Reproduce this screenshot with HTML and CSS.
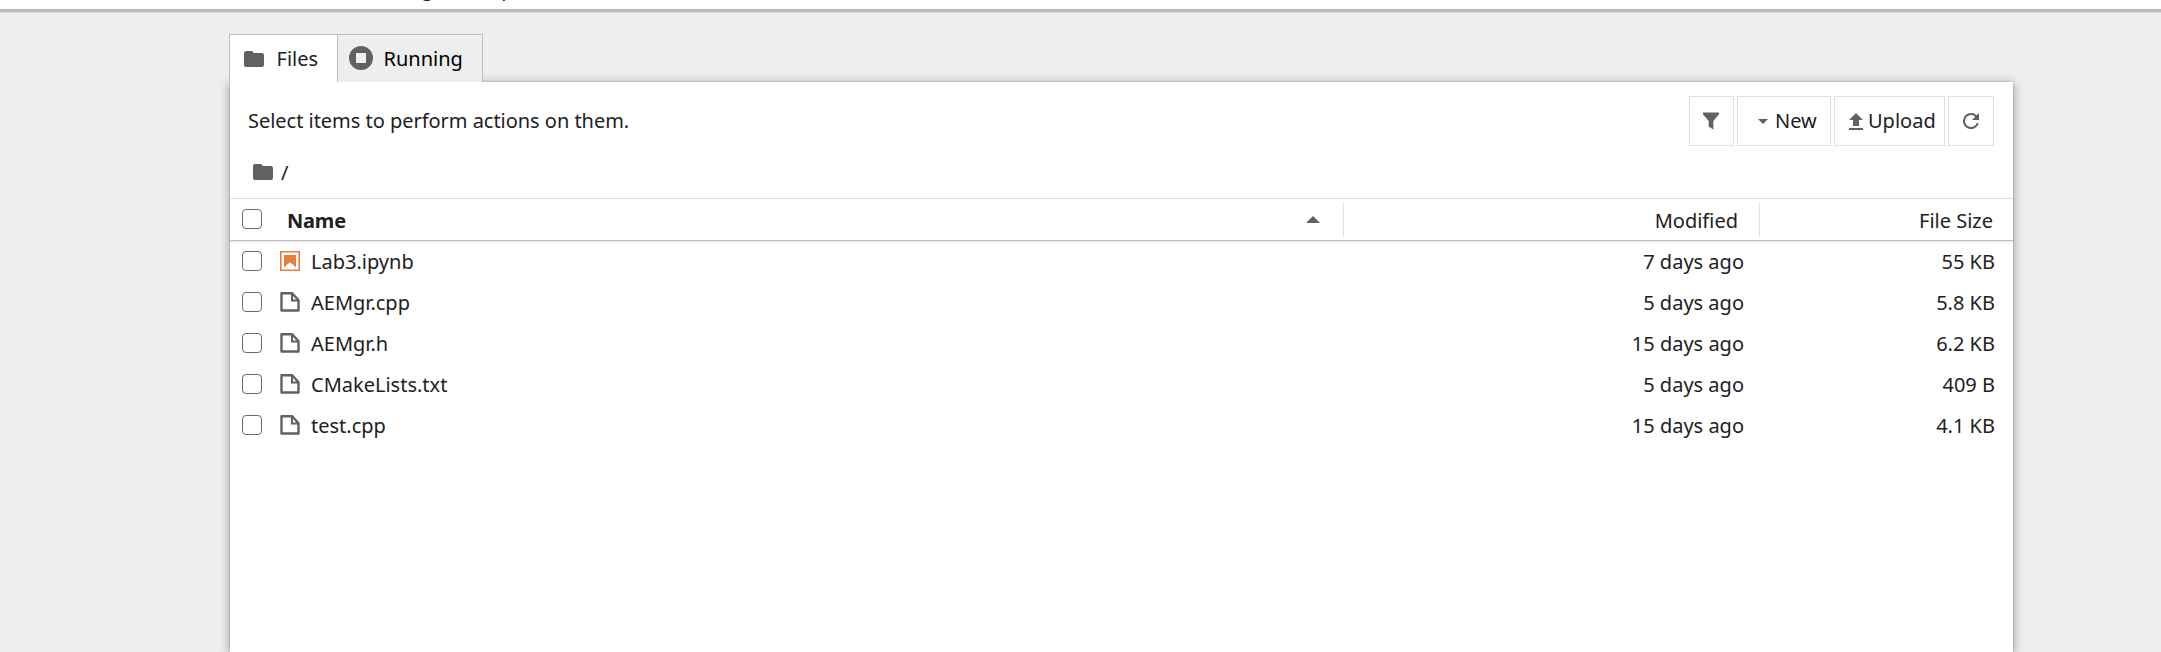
FILE: index.html
```html
<!DOCTYPE html>
<html lang="en">
<head>
<meta charset="utf-8">
<title>Files</title>
<link rel="stylesheet" href="styles.css">
</head>
<body>
<svg class="defs" width="0" height="0">
  <symbol id="folder" viewBox="0 0 20 16"><path d="M2 0h6l2 2h8a2 2 0 0 1 2 2v10a2 2 0 0 1-2 2H2a2 2 0 0 1-2-2V2a2 2 0 0 1 2-2z"/></symbol>
  <symbol id="file" viewBox="0 0 20 20"><path fill="none" stroke="currentColor" stroke-width="2.4" stroke-linejoin="round" d="M1.5 1.3h10.7l6.3 6.9v10.3h-17z"/><path fill="none" stroke="currentColor" stroke-width="2" d="M12 1.5v6.9h6.5"/></symbol>
</svg>
<header class="menubar"><span>Settings</span><span>Help</span></header>
<main class="main">
  <nav class="tabs">
    <div class="tab tab-current"><svg class="folder"><use href="#folder"/></svg><span>Files</span></div>
    <div class="tab tab-running"><svg class="stop" viewBox="0 0 24 24"><path fill-rule="evenodd" d="M12 0a12 12 0 1 1 0 24 12 12 0 0 1 0-24zM7 7v10h10V7z"/></svg><span>Running</span></div>
  </nav>
  <section class="panel">
    <div class="toolbar">
      <span class="hint">Select items to perform actions on them.</span>
      <div class="buttons">
        <button class="btn btn-filter"><svg width="16" height="18" viewBox="0 0 17 18"><path d="M0 0h17v1.8L11 9v9l-5-3.2V9L0 1.8z"/></svg></button>
        <button class="btn btn-new"><svg width="10" height="5" viewBox="0 0 10 5"><path d="M0 0h10L5 5z"/></svg><span>New</span></button>
        <button class="btn btn-upload"><svg width="14" height="17" viewBox="0 0 14 17"><path d="M7 0l7 7h-4v6H4V7H0zM0 15h14v2H0z"/></svg><span>Upload</span></button>
        <button class="btn btn-refresh"><svg width="16" height="16" viewBox="4 4 16 16"><path d="M17.65 6.35A7.96 7.96 0 0 0 12 4a8 8 0 1 0 7.73 10h-2.08A6 6 0 1 1 12 6c1.66 0 3.14.69 4.22 1.78L13 11h7V4z"/></svg></button>
      </div>
    </div>
    <div class="crumbs"><svg class="folder"><use href="#folder"/></svg><span>/</span></div>
    <div class="row head">
      <div class="cell name"><i class="check"></i><b>Name</b><svg class="sort" width="14" height="7" viewBox="0 0 14 7"><path d="M0 7h14L7 0z"/></svg></div>
      <div class="cell modified">Modified</div>
      <div class="cell size">File Size</div>
    </div>
    <div class="list">
      <div class="row"><div class="cell name"><i class="check"></i><svg class="icon notebook" viewBox="0 0 20 20"><path fill-rule="evenodd" d="M0 0h20v20H0zM1.6 1.6v16.8h16.8V1.6z"/><path d="M4 4h12v12.2l-6-5-6 5z"/></svg><span>Lab3.ipynb</span></div><div class="cell modified">7 days ago</div><div class="cell size">55 KB</div></div>
      <div class="row"><div class="cell name"><i class="check"></i><svg class="icon"><use href="#file"/></svg><span>AEMgr.cpp</span></div><div class="cell modified">5 days ago</div><div class="cell size">5.8 KB</div></div>
      <div class="row"><div class="cell name"><i class="check"></i><svg class="icon"><use href="#file"/></svg><span>AEMgr.h</span></div><div class="cell modified">15 days ago</div><div class="cell size">6.2 KB</div></div>
      <div class="row"><div class="cell name"><i class="check"></i><svg class="icon"><use href="#file"/></svg><span>CMakeLists.txt</span></div><div class="cell modified">5 days ago</div><div class="cell size">409 B</div></div>
      <div class="row"><div class="cell name"><i class="check"></i><svg class="icon"><use href="#file"/></svg><span>test.cpp</span></div><div class="cell modified">15 days ago</div><div class="cell size">4.1 KB</div></div>
    </div>
  </section>
</main>
</body>
</html>
```
FILE: styles.css
```css
* { box-sizing: border-box; }
body {
  margin: 0;
  height: 652px;
  overflow: hidden;
  display: flex;
  flex-direction: column;
  background: #eee;
  color: #212121;
  font: 20px/28px "Noto Sans", sans-serif;
}
svg { display: block; flex: none; fill: #616161; color: #616161; }
.defs { position: absolute; }
.menubar {
  flex: none;
  height: 12px;
  background: #fff;
  border-bottom: 3px solid #a5a5a5;
  border-image: linear-gradient(#bdbdbd 33%, #999 34%, #999 66%, #bbb 67%) 3;
  box-shadow: 0 1px 1px rgba(0,0,0,.06);
  display: flex;
  align-items: flex-end;
  gap: 27px;
  padding-left: 367px;
  overflow: hidden;
}
.menubar span { margin-bottom: 6px; }
.main { flex: 1; display: flex; flex-direction: column; padding: 22px 148px 0 229px; }
.tabs { flex: none; display: flex; height: 48px; position: relative; z-index: 1; }
.tab {
  display: flex;
  align-items: center;
  border: 1px solid #bdbdbd;
  border-bottom: 0;
  color: #000;
}
.tab-current { width: 109px; background: #fff; color: #212121; padding-left: 14px; gap: 12.5px; }
.tab-running { width: 146px; margin-left: -1px; background: #eee; padding-left: 11px; gap: 10.5px; }
.folder { width: 20px; height: 16px; }
.stop { width: 24px; height: 24px; margin-top: -1px; }
.panel {
  flex: 1;
  margin-left: 1px;
  background: #fff;
  box-shadow: 0 0 2px rgba(0,0,0,.24), 0 2px 10px 1px rgba(0,0,0,.3);
}
.toolbar { display: flex; justify-content: space-between; padding: 14px 19px 0 18px; }
.hint { padding-top: 11px; letter-spacing: -0.03px; }
.buttons { display: flex; gap: 3px; }
.btn {
  height: 50px;
  padding: 0;
  background: #fff;
  border: 1px solid #e0e0e0;
  color: #212121;
  font: inherit;
  display: flex;
  align-items: center;
}
.btn-filter { width: 45px; padding-left: 13px; }
.btn-new { width: 94px; padding-left: 20px; gap: 7px; }
.btn-upload { width: 111px; padding-left: 14px; gap: 5px; }
.btn-refresh { width: 46px; padding-left: 14px; }
.crumbs { display: flex; align-items: center; gap: 8px; height: 52px; padding-left: 23px; }
.crumbs span { padding-top: 2px; }
.row { display: flex; height: 41px; align-items: stretch; }
.cell { display: flex; align-items: center; }
.name { width: 1114px; padding-left: 12px; }
.modified { width: 416px; justify-content: flex-end; padding-right: 16px; }
.size { width: 253px; justify-content: flex-end; padding-right: 18px; }
.check { flex: none; width: 20px; height: 20px; margin-top: -1px; border: 1px solid #6b6b6b; border-radius: 4px; background: #fff; }
.icon { width: 20px; height: 20px; margin: -1px 11px 0 18px; }
.notebook { fill: #e67e3c; }
.head { height: 43px; border-top: 1px solid #e0e0e0; border-bottom: 1px solid #bdbdbd; box-shadow: 0 1px 2px rgba(0,0,0,.12); padding: 3px 0; }
.head b { margin-left: 25px; padding-top: 2px; letter-spacing: -0.2px; }
.head .check { margin-top: -2px; }
.head .name { border-right: 1px solid #e0e0e0; padding-right: 23px; }
.head .sort { margin-left: auto; }
.head .modified { border-right: 1px solid #e0e0e0; padding-right: 21px; padding-top: 2px; }
.head .size { padding-right: 20px; padding-top: 2px; }
```
